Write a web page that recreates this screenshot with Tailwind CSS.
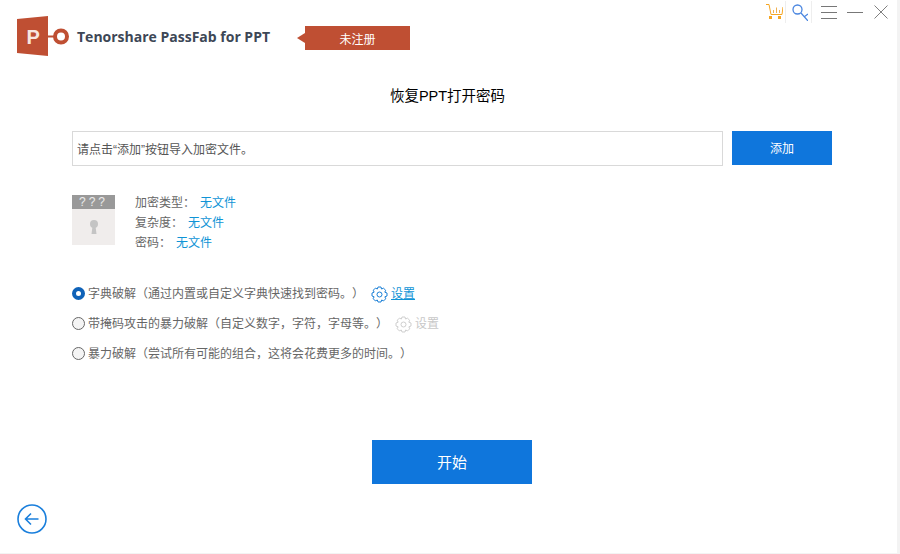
<!doctype html>
<html>
<head>
  <meta charset="UTF-8">
  <script src="https://cdn.jsdelivr.net/npm/@tailwindcss/browser@4"></script>
  <title>Tenorshare PassFab for PPT</title>
</head>
<body class="bg-white">
  <div class="w-[900px] h-[554px] relative overflow-hidden flex flex-col font-['Liberation_Sans','Noto_Sans_CJK_SC',sans-serif] text-xs text-[#666] [text-spacing-trim:space-all] border-r-[3px] border-b border-[#f3f3f3]">
    <!-- window buttons -->
    <div class="absolute top-[1px] right-[9px] flex items-center h-[22px]">
      <svg width="17" height="15" viewBox="0 0 17 15" fill="none" class="-mt-[1px]">
        <path d="M0 0.500H3L5 10.500H16L17 3" stroke="#f5a623" stroke-width="1"/>
        <rect x="3" y="12" width="3" height="3" fill="#f5a623"/><rect x="12" y="12" width="3" height="3" fill="#f5a623"/>
        <path d="M7.500 9V6M10.500 9V3.500M13.500 9V6" stroke="#f0b050" stroke-width="1"/>
      </svg>
      <div class="w-px h-[22px] bg-[#eee] ml-[2px] mr-[6px]"></div>
      <svg width="16" height="17" viewBox="0 0 16 17" fill="none" stroke="#4a86e0">
        <circle cx="5.500" cy="5.500" r="4.500" stroke-width="1.300"/>
        <path d="M9 9L16 17M12 13L16 10" stroke-width="1.200"/>
      </svg>
      <div class="w-px h-[22px] bg-[#eee] ml-[3px] mr-[9px]"></div>
      <div class="flex flex-col gap-[5px] w-[16px] mr-[10px]">
        <div class="h-px bg-[#777]"></div><div class="h-px bg-[#777]"></div><div class="h-px bg-[#777]"></div>
      </div>
      <div class="w-[16px] h-px bg-[#777] mr-[11px]"></div>
      <svg width="14" height="14" viewBox="0 0 14 14" stroke="#808080" stroke-width="1"><path d="M0.500 0.500L13.500 13.500M13.500 0.500L0.500 13.500"/></svg>
    </div>

    <!-- header -->
    <div class="flex items-center pl-[17px] pt-[16px] h-[56px]">
      <svg width="53" height="40" viewBox="0 0 53 40">
        <path d="M0 3L31 0V40L0 37Z" fill="#bf4f33"/>
        <path d="M31 20.500H38" stroke="#bf4f33" stroke-width="2"/>
        <circle cx="44" cy="20.500" r="6" fill="none" stroke="#bf4f33" stroke-width="4"/>
        <text x="9.500" y="27.500" font-family="Liberation Sans" font-weight="700" font-size="20" fill="#f8e6e0">P</text>
      </svg>
      <span class="ml-[7px] w-[220px] mt-[2px] font-['Open_Sans'] font-bold text-[14px] text-[#3d4756] whitespace-nowrap">Tenorshare PassFab for PPT</span>
      <div class="mt-[4px] w-0 h-0 border-y-[5px] border-y-transparent border-r-[8px] border-r-[#bf4f33]"></div>
      <div class="mt-[4px] pt-[3px] w-[105px] h-[24px] bg-[#bf4f33] text-white flex items-center justify-center">未注册</div>
    </div>

    <h1 class="mt-[30px] text-center text-[14.5px] leading-[20px] text-black pr-[2px]">恢复PPT打开密码</h1>

    <!-- file input row -->
    <div class="mt-[25px] ml-[72px] flex gap-[9px]">
      <div class="w-[651px] h-[35px] border border-[#d9d9d9] flex items-center pl-[4px] pt-[2px] text-[#555]">请点击“添加”按钮导入加密文件。</div>
      <button class="w-[100px] h-[34px] pt-[2px] bg-[#0f76dc] text-white">添加</button>
    </div>

    <!-- file info -->
    <div class="mt-[29px] ml-[72px] h-[50px] flex gap-[20px]">
      <div class="w-[43px] h-[50px] bg-[#f0edec] flex flex-col items-center">
        <div class="w-full h-[14px] bg-[#999] text-white/80 text-center leading-[14px] tracking-[3px] font-['Liberation_Sans']">???</div>
        <svg class="mt-[11px]" width="8" height="14" viewBox="0 0 8 14" fill="#c4c4c4"><circle cx="4" cy="4" r="4"/><path d="M2.500 6H5.500L6.500 14H1.500Z"/></svg>
      </div>
      <div class="flex flex-col gap-[6px] leading-[14px] pt-px">
        <div>加密类型：<span class="ml-[5px] text-[#0f94d6]">无文件</span></div>
        <div>复杂度：<span class="ml-[5px] text-[#0f94d6]">无文件</span></div>
        <div>密码：<span class="ml-[5px] text-[#0f94d6]">无文件</span></div>
      </div>
    </div>

    <!-- modes -->
    <div class="mt-[38px] ml-[72px] flex flex-col gap-[10px]">
      <div class="h-[20px] flex items-center">
        <div class="w-[13px] h-[13px] rounded-full border-[4px] border-[#0f62b8] bg-white"></div>
        <span class="ml-[3px] mt-[2px]">字典破解（通过内置或自定义字典快速找到密码。）</span>
        <svg class="ml-[7px] mt-[2px]" width="17" height="17" viewBox="0 0 17 17" fill="none" stroke="#1a7fd6" stroke-width="1"><circle cx="8.500" cy="8.500" r="2.500"/><path d="M7 1H10L10.500 3L12.500 2.200L14.700 4.300L13.800 6.200L16 7V10L13.900 10.800L14.700 12.800L12.600 14.900L10.600 14L10 16H7L6.300 14L4.300 14.900L2.200 12.700L3.100 10.800L1 10V7L3.100 6.200L2.300 4.200L4.400 2.100L6.400 3Z"/></svg>
        <span class="ml-[3px] mt-[2px] text-[#0f94d6] underline underline-offset-1">设置</span>
      </div>
      <div class="h-[20px] flex items-center">
        <div class="w-[13px] h-[13px] rounded-full border border-[#666] bg-[#f4f4f4]"></div>
        <span class="ml-[3px] mt-[2px]">带掩码攻击的暴力破解（自定义数字，字符，字母等。）</span>
        <svg class="ml-[7px] mt-[2px]" width="17" height="17" viewBox="0 0 17 17" fill="none" stroke="#cfcfcf" stroke-width="1"><circle cx="8.500" cy="8.500" r="2.500"/><path d="M7 1H10L10.500 3L12.500 2.200L14.700 4.300L13.800 6.200L16 7V10L13.900 10.800L14.700 12.800L12.600 14.900L10.600 14L10 16H7L6.300 14L4.300 14.900L2.200 12.700L3.100 10.800L1 10V7L3.100 6.200L2.300 4.200L4.400 2.100L6.400 3Z"/></svg>
        <span class="ml-[3px] mt-[2px] text-[#c8c8c8]">设置</span>
      </div>
      <div class="h-[20px] flex items-center">
        <div class="w-[13px] h-[13px] rounded-full border border-[#666] bg-[#f4f4f4]"></div>
        <span class="ml-[3px] mt-[2px]">暴力破解（尝试所有可能的组合，这将会花费更多的时间。）</span>
      </div>
    </div>

    <button class="mt-[77px] ml-[372px] w-[160px] h-[44px] pt-[2px] bg-[#0f76dc] text-white text-[15px]">开始</button>

    <svg class="mt-[20px] ml-[17px]" width="30" height="30" viewBox="0 0 30 30" fill="none" stroke="#1a7fdc">
      <circle cx="15" cy="15" r="14" stroke-width="1.600"/>
      <path d="M21.500 15H9M14 9.500L8.500 15L14 20.500" stroke-width="1.600"/>
    </svg>
  </div>
</body>
</html>
